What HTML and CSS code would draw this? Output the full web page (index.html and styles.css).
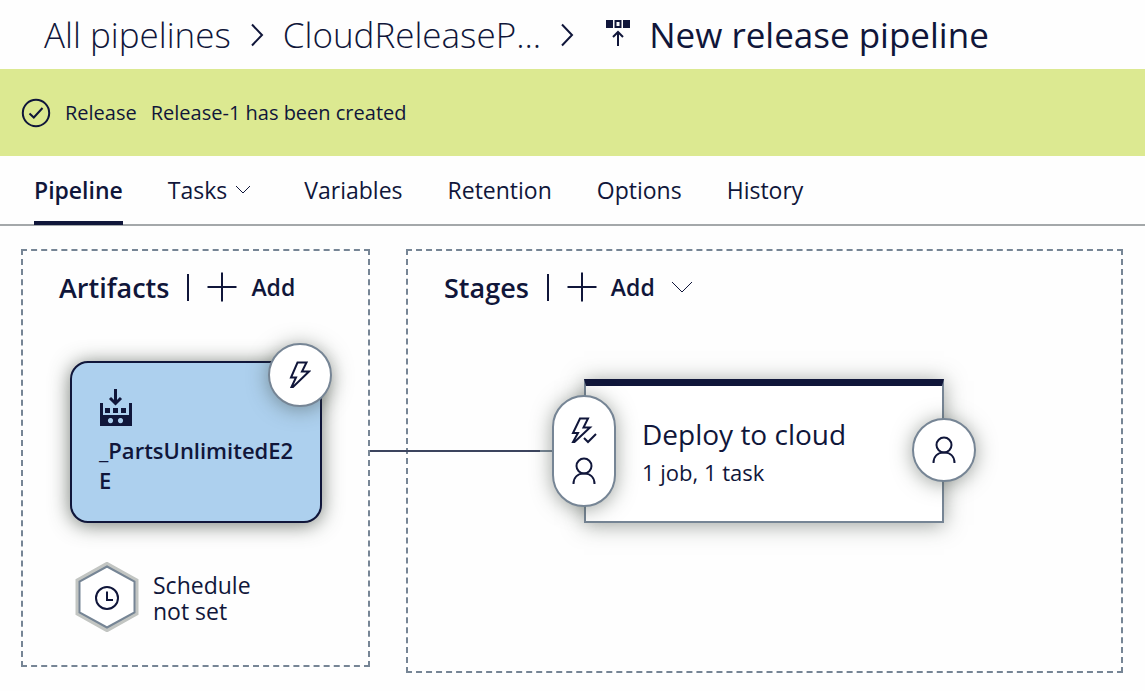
FILE: index.html
```html
<!DOCTYPE html>
<html lang="en">
<head>
<meta charset="utf-8">
<title>New release pipeline</title>
<meta name="viewport" content="width=device-width, initial-scale=1">
<link rel="stylesheet" href="styles.css">
</head>
<body>
<header class="header">
  <nav class="crumbs" aria-label="Breadcrumb">
    <a href="#" class="crumb crumb-root">All pipelines</a>
    <svg class="crumb-sep" viewBox="0 0 14 24" aria-hidden="true"><path d="M2 1.5 12 12 2 22.5"/></svg>
    <a href="#" class="crumb crumb-folder">CloudReleaseP...</a>
    <svg class="crumb-sep" viewBox="0 0 14 24" aria-hidden="true"><path d="M2 1.5 12 12 2 22.5"/></svg>
  </nav>
  <svg class="release-icon" viewBox="0 0 26 28" aria-hidden="true">
    <path class="solid" d="M1 1h7v8H1zM18 1h7v8h-7zM9.500 1h7v8h-7zM11.500 3v4h3V3z" fill-rule="evenodd"/>
    <path class="line" d="M13 27V13M8 18l5-5 5 5"/>
  </svg>
  <h1 class="title">New release pipeline</h1>
</header>

<div class="banner" role="status">
  <svg class="check-icon" viewBox="0 0 30 30" aria-hidden="true"><circle cx="15" cy="15" r="13.2"/><path d="M8.500 15.500 12.800 19.500 21.500 10"/></svg>
  <span>Release</span>
  <span>Release-1 has been created</span>
</div>

<nav class="tabs" aria-label="Pipeline sections">
  <a href="#" class="tab tab-active" aria-current="page">Pipeline</a>
  <a href="#" class="tab tab-menu">Tasks
    <svg class="chevron-small" viewBox="0 0 16 10" aria-hidden="true"><path d="M1 1l7 7 7-7"/></svg>
  </a>
  <a href="#" class="tab">Variables</a>
  <a href="#" class="tab">Retention</a>
  <a href="#" class="tab">Options</a>
  <a href="#" class="tab">History</a>
</nav>

<main class="canvas">
  <section class="panel artifacts">
    <div class="panel-head">
      <h2 class="panel-title">Artifacts</h2>
      <button type="button" class="add">
        <svg class="plus" viewBox="0 0 30 30" aria-hidden="true"><path d="M15 .5v29M.5 15h29"/></svg>Add
      </button>
    </div>
    <div class="artifact">
      <svg class="build-icon" viewBox="0 0 32 38" aria-hidden="true">
        <path class="solid" fill-rule="evenodd" d="M0 14h3v12h26V14h3v23H0zM10.500 29a2.600 2.600 0 1 0 .01 0zM20.500 29a2.600 2.600 0 1 0 .01 0z"/>
        <path class="solid" d="M5 19h5v5H5zM13 19h5v5h-5zM21 19h5v5h-5z"/>
        <path class="arrow" d="M15.500 0v14M10 9l5.500 5.500L21 9"/>
      </svg>
      <p class="artifact-name">_PartsUnlimitedE2E</p>
      <button type="button" class="node trigger" aria-label="Continuous deployment trigger">
        <svg class="bolt" viewBox="0 0 22 28" aria-hidden="true"><path d="M8.500 1.500h9L13 10.500h7L4 26H2.500L7 16.500H2z"/></svg>
      </button>
    </div>
    <div class="schedule">
      <svg class="hexagon" viewBox="0 0 64 70" aria-hidden="true">
        <path class="halo" d="M32 3 60.500 19v32L32 67 3.500 51V19z"/>
        <path class="edge" d="M32 4.500 59.500 19.500v31L32 65.500 4.500 50.500v-31z"/>
        <circle class="line" cx="32" cy="36" r="11"/>
        <path class="line" d="M32 29.500V38h6"/>
      </svg>
      <p class="schedule-text">Schedule not set</p>
    </div>
  </section>

  <section class="panel stages">
    <div class="panel-head">
      <h2 class="panel-title">Stages</h2>
      <button type="button" class="add">
        <svg class="plus" viewBox="0 0 30 30" aria-hidden="true"><path d="M15 .5v29M.5 15h29"/></svg>Add
        <svg class="chevron" viewBox="0 0 22 12" aria-hidden="true"><path d="M1 1l10 10L21 1"/></svg>
      </button>
    </div>
    <div class="stage">
      <h3 class="stage-name">Deploy to cloud</h3>
      <a href="#" class="stage-tasks">1 job, 1 task</a>
      <button type="button" class="node pre" aria-label="Pre-deployment conditions">
        <svg class="bolt-check" viewBox="0 0 26 28" aria-hidden="true"><path d="M9 1.500h8L12.500 10.500h6.500L3.500 25H2l5-9H2zM13 21l4 4 8-8"/></svg>
        <svg class="person" viewBox="0 0 24 28" aria-hidden="true"><circle cx="12" cy="9" r="7.500"/><path d="M1.500 27C1.500 20 6 16.500 12 16.500S22.500 20 22.500 27"/></svg>
      </button>
      <button type="button" class="node post" aria-label="Post-deployment conditions">
        <svg class="person" viewBox="0 0 24 28" aria-hidden="true"><circle cx="12" cy="9" r="7.500"/><path d="M1.500 27C1.500 20 6 16.500 12 16.500S22.500 20 22.500 27"/></svg>
      </button>
    </div>
  </section>
</main>
</body>
</html>
```
FILE: styles.css
```css
:root {
  --ink: #10163a;
  --slate: #768595;
  --glow: 0 2px 20px rgba(60, 70, 60, 0.5);
}

* { box-sizing: border-box; }

body {
  margin: 0;
  background: #fefefe;
  color: var(--ink);
  font-family: "Open Sans", "Noto Sans", sans-serif;
  font-size: 23px;
}

a { color: inherit; text-decoration: none; }
h1, h2, h3, p { margin: 0; }
svg { flex: none; fill: none; stroke: var(--ink); stroke-width: 2; }
.solid { fill: var(--ink); stroke: none; }

button {
  padding: 0;
  border: 0;
  background: none;
  color: inherit;
  font: inherit;
  cursor: pointer;
}

.header {
  display: flex;
  align-items: center;
  height: 69px;
  padding-left: 44px;
  white-space: nowrap;
}

.crumbs { display: flex; align-items: center; }
.crumb { font-size: 35px; font-weight: 300; line-height: 68px; }
.crumb-sep { width: 14px; height: 24px; margin: 0 19px; }
.release-icon { width: 26px; height: 28px; margin: 0 18px 4px 12px; }
.title { font-size: 35px; font-weight: 400; line-height: 68px; }

.banner {
  display: flex;
  align-items: center;
  gap: 14px;
  height: 87px;
  padding-left: 21px;
  background: #dce991;
  font-size: 20px;
}
.check-icon { width: 30px; height: 30px; }

.tabs {
  display: flex;
  gap: 45px;
  height: 70px;
  padding-left: 34px;
  border-bottom: 2px solid #a4a8aa;
}
.tab { height: 69px; line-height: 68px; }
.tab-active { border-bottom: 4px solid var(--ink); font-weight: 600; }
.tab-menu { display: flex; align-items: center; gap: 8px; height: 68px; margin-right: 8px; }
.chevron-small { width: 16px; height: 10px; stroke-width: 1; }

.canvas {
  display: grid;
  grid-template-columns: 349px 1fr;
  align-items: start;
  gap: 36px;
  padding: 23px 22px 18px 21px;
}

.panel { border: 2px dashed var(--slate); padding: 16px 0 0 36px; }
.artifacts { padding-bottom: 33px; }
.stages { padding-bottom: 148px; }

.panel-head { display: flex; align-items: center; height: 40px; }
.panel-title { font-size: 27px; font-weight: 600; }
.add {
  display: flex;
  align-items: center;
  gap: 14px;
  margin-left: 18px;
  font-weight: 600;
}
.add::before { content: ""; width: 2px; height: 27px; margin-right: 4px; background: var(--ink); }
.plus { width: 30px; height: 30px; }
.chevron { width: 22px; height: 12px; margin-left: 2px; }
.chevron path { stroke-width: 1; }

.artifact {
  position: relative;
  width: 252px;
  height: 162px;
  margin: 54px 0 0 11px;
  padding: 26px 20px 26px 27px;
  border: 2px solid var(--ink);
  border-radius: 18px;
  background: #add0ee;
  box-shadow: 0 2px 20px rgba(60, 70, 60, 0.7);
}
.build-icon { display: block; width: 32px; height: 38px; margin-left: 1px; }
.arrow { stroke-width: 3; }
.artifact-name {
  margin-top: 8px;
  font-size: 22px;
  font-weight: 600;
  line-height: 30px;
  word-break: break-all;
}

.node {
  position: absolute;
  display: flex;
  flex-direction: column;
  align-items: center;
  justify-content: center;
  width: 64px;
  height: 64px;
  border: 2px solid var(--slate);
  border-radius: 32px;
  background: #fff;
  box-shadow: var(--glow);
}
.trigger { top: -20px; right: -12px; }
.bolt { width: 22px; height: 28px; }

.schedule { display: flex; align-items: center; gap: 14px; margin: 39px 0 0 16px; }
.hexagon { width: 64px; height: 70px; }
.halo { stroke: #c2c5c2; stroke-width: 6; }
.edge { fill: #fff; stroke: var(--slate); }
.schedule-text { width: 110px; padding-top: 2px; line-height: 26px; }

.stage {
  position: relative;
  width: 360px;
  height: 144px;
  margin: 72px 0 0 140px;
  padding: 32px 48px 0 56px;
  border: 2px solid var(--slate);
  border-top: 7px solid var(--ink);
  background: #fff;
  box-shadow: var(--glow);
}
.stage-name { font-size: 28px; font-weight: 400; line-height: 32px; white-space: nowrap; }
.stage-tasks { display: block; margin-top: 6px; font-size: 22px; line-height: 32px; }
.stage::before {
  content: "";
  position: absolute;
  top: 64px;
  right: 100%;
  width: 216px;
  height: 2px;
  background: linear-gradient(90deg, #3c445e 170px, var(--slate) 170px);
}
.pre { top: 9px; left: -34px; height: 112px; gap: 12px; }
.post { top: 32px; right: -34px; }
.bolt-check { width: 26px; height: 28px; }
.person { width: 24px; height: 28px; }
```
